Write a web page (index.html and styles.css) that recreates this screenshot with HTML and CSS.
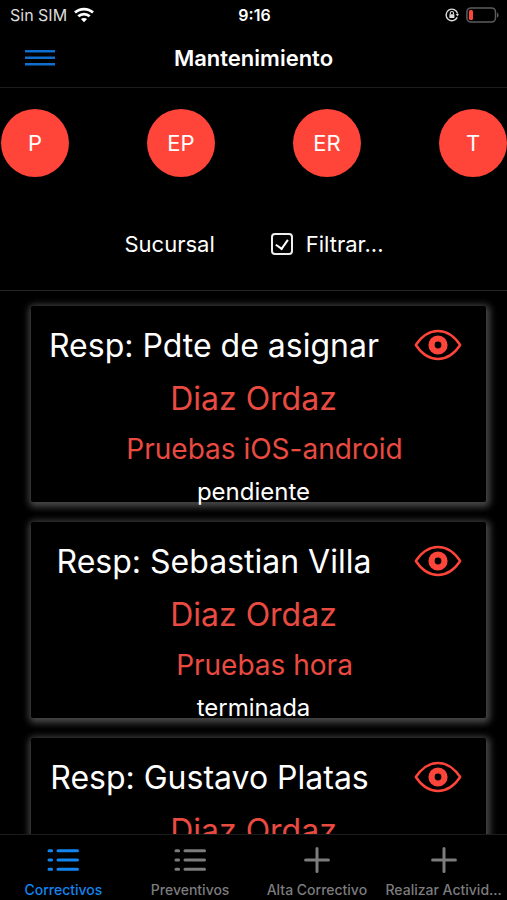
FILE: index.html
```html
<!DOCTYPE html>
<html lang="es">
<head>
<meta charset="utf-8">
<meta name="viewport" content="width=device-width, initial-scale=1">
<title>Mantenimiento</title>
<link rel="stylesheet" href="styles.css">
</head>
<body>
<div class="status">
  <div class="carrier">
    <span>Sin SIM</span>
    <svg width="20" height="16" viewBox="0 0 20 16" fill="none" stroke="#fff" stroke-width="2.8">
      <path d="M1 5.6C6 .9 14 .9 19 5.6"/>
      <path d="M4.3 9.3C7.6 6.3 12.4 6.3 15.7 9.3"/>
      <path d="M10 15.2 6.9 12.1C8.6 10.5 11.4 10.5 13.1 12.1Z" fill="#fff" stroke="none"/>
    </svg>
  </div>
  <time class="clock">9:16</time>
  <div class="power">
    <svg width="14" height="14" viewBox="0 0 14 14" fill="none" stroke="#ddd" stroke-width="1.4">
      <path d="M12.2 9.4A5.8 5.8 0 1 1 12.6 5.6"/>
      <path d="M10.8 6h3.2l-1.6 2.6Z" fill="#ddd" stroke="none"/>
      <path d="M5.3 6.4V5.1a1.6 1.6 0 0 1 3.2 0v1.3" stroke-width="1.1"/>
      <rect x="4.4" y="6.2" width="5" height="3.9" rx=".6" fill="#ddd" stroke="none"/>
    </svg>
    <svg width="33" height="16" viewBox="0 0 33 16" fill="none">
      <rect x=".9" y=".9" width="28.6" height="14.2" rx="4" stroke="#5c5c5e" stroke-width="1.5"/>
      <rect x="3" y="3" width="4" height="10" rx="1.5" fill="#ff453a"/>
      <path d="M31 5.4c2 .9 2 4.3 0 5.2Z" fill="#5c5c5e"/>
    </svg>
  </div>
</div>

<header class="nav">
  <button class="menu" aria-label="Menú">
    <svg width="30" height="18" viewBox="0 0 30 18" stroke="#0f6fce" stroke-width="2.4"><path d="M0 2.200h30M0 8.700h30M0 15.200h30"/></svg>
  </button>
  <h1>Mantenimiento</h1>
</header>

<section class="filters">
  <div class="states">
    <button class="state">P</button>
    <button class="state">EP</button>
    <button class="state">ER</button>
    <button class="state">T</button>
  </div>
  <div class="options">
    <button class="branch">Sucursal</button>
    <label class="check" for="filter"><input type="checkbox" id="filter" checked>Filtrar...</label>
  </div>
</section>

<svg width="0" height="0" class="defs" aria-hidden="true">
  <symbol id="eye" viewBox="0 0 48 32">
    <path d="M1.800 16C6.500 9 14 2 24 2S41.500 9 46.200 16C41.500 23 34 30 24 30S6.500 23 1.800 16Z" fill="none" stroke="currentColor" stroke-width="2.400" stroke-linejoin="round"/>
    <circle cx="24" cy="16" r="6.500" fill="none" stroke="currentColor" stroke-width="6.200"/>
  </symbol>
</svg>

<main class="list">
  <article class="card">
    <div class="top">
      <h2>Resp: Pdte de asignar</h2>
      <button class="view" aria-label="Ver"><svg><use href="#eye"/></svg></button>
    </div>
    <p class="place">Diaz Ordaz</p>
    <p class="task">Pruebas iOS-android</p>
    <p class="progress">pendiente</p>
  </article>
  <article class="card">
    <div class="top">
      <h2>Resp: Sebastian Villa</h2>
      <button class="view" aria-label="Ver"><svg><use href="#eye"/></svg></button>
    </div>
    <p class="place">Diaz Ordaz</p>
    <p class="task">Pruebas hora</p>
    <p class="progress">terminada</p>
  </article>
  <article class="card">
    <div class="top">
      <h2>Resp: Gustavo Platas </h2>
      <button class="view" aria-label="Ver"><svg><use href="#eye"/></svg></button>
    </div>
    <p class="place">Diaz Ordaz</p>
  </article>
</main>

<nav class="tabs">
  <a href="#correctivos" class="tab active">
    <svg width="32" height="26" viewBox="0 0 32 26" fill="none" stroke="currentColor" stroke-width="3" stroke-linecap="round"><path d="M2 3.700h2.600M11 3.700h19.500M2 13h2.600M11 13h19.500M2 22.300h2.600M11 22.300h19.500"/></svg>
    <span>Correctivos</span>
  </a>
  <a href="#preventivos" class="tab">
    <svg width="32" height="26" viewBox="0 0 32 26" fill="none" stroke="currentColor" stroke-width="3" stroke-linecap="round"><path d="M2 3.700h2.600M11 3.700h19.500M2 13h2.600M11 13h19.500M2 22.300h2.600M11 22.300h19.500"/></svg>
    <span>Preventivos</span>
  </a>
  <a href="#alta" class="tab">
    <svg width="26" height="26" viewBox="0 0 26 26" fill="none" stroke="currentColor" stroke-width="3" stroke-linecap="round"><path d="M13 1.600v22.800M1.600 13h22.800"/></svg>
    <span>Alta Correctivo</span>
  </a>
  <a href="#actividad" class="tab">
    <svg width="26" height="26" viewBox="0 0 26 26" fill="none" stroke="currentColor" stroke-width="3" stroke-linecap="round"><path d="M13 1.600v22.800M1.600 13h22.800"/></svg>
    <span>Realizar Activid...</span>
  </a>
</nav>
</body>
</html>
```
FILE: styles.css
```css
* { box-sizing: border-box; }

body {
  margin: 0;
  height: 100vh;
  display: flex;
  flex-direction: column;
  overflow: hidden;
  background: #000;
  color: #fff;
  font-family: Inter, "Liberation Sans", sans-serif;
}

h1, h2, p { margin: 0; font-weight: 400; }

button {
  padding: 0;
  border: 0;
  background: none;
  color: inherit;
  font: inherit;
}

.defs { position: absolute; }

.status {
  display: grid;
  grid-template-columns: 1fr auto 1fr;
  align-items: center;
  height: 29px;
  padding: 0 8px 0 10px;
  font-size: 16px;
}

.carrier, .power { display: flex; align-items: center; gap: 7px; }
.carrier { color: #ddd; }
.power { justify-content: flex-end; }
.clock { font-weight: 600; }

.nav {
  display: grid;
  grid-template-columns: 1fr auto 1fr;
  align-items: center;
  height: 59px;
  padding: 0 25px;
  border-bottom: 1px solid #1c1c1e;
}

.menu { justify-self: start; display: flex; }
.nav h1 { font-size: 22px; font-weight: 600; }

.filters {
  padding: 21px 0 32px 1px;
  border-bottom: 1px solid #242426;
  font-size: 22px;
}

.states { display: flex; justify-content: space-between; }

.state {
  width: 68px;
  height: 68px;
  border-radius: 50%;
  background: #ff453a;
}

.options {
  display: flex;
  justify-content: center;
  gap: 56px;
  margin-top: 53px;
  line-height: 28px;
}

.check { display: flex; align-items: center; gap: 13px; }

.check input {
  appearance: none;
  display: grid;
  place-items: center;
  width: 22px;
  height: 22px;
  margin: 0;
  border: 2px solid #eee;
  border-radius: 4px;
}

.check input:checked::before {
  content: "";
  width: 6px;
  height: 10px;
  border: solid #fff;
  border-width: 0 2px 2px 0;
  transform: translateY(-1px) rotate(35deg);
}

.list {
  flex: 1;
  min-height: 0;
  display: flex;
  flex-direction: column;
  gap: 20px;
  padding: 15px 21px 0 31px;
  overflow: hidden;
}

.card {
  flex: none;
  height: 196px;
  padding: 14px 10px 0 0;
  border-radius: 2px;
  background: #000;
  box-shadow: 1px 2px 7px 3px #484848;
  text-align: center;
}

.top {
  display: flex;
  align-items: center;
  gap: 27px;
  height: 50px;
  padding: 0 14px 0 10px;
}

.top h2 { flex: 1; font-size: 32px; white-space: pre; }

.view { display: flex; color: #ff453a; }
.view svg { width: 48px; height: 32px; }

.place { color: #ea4b41; font-size: 32px; line-height: 58px; }
.task { padding-left: 22px; color: #ea4b41; font-size: 28px; line-height: 42px; }
.progress { font-size: 24px; line-height: 44px; }

.tabs {
  display: grid;
  grid-template-columns: repeat(4, 1fr);
  height: 66px;
  border-top: 1px solid #1c1c1e;
  background: #000;
}

.tab {
  display: flex;
  flex-direction: column;
  align-items: center;
  gap: 9px;
  padding-top: 12px;
  color: #7c7c7e;
  font-size: 14px;
  font-weight: 500;
  line-height: 16px;
  white-space: nowrap;
  text-decoration: none;
}

.active { color: #1484ee; }
```
